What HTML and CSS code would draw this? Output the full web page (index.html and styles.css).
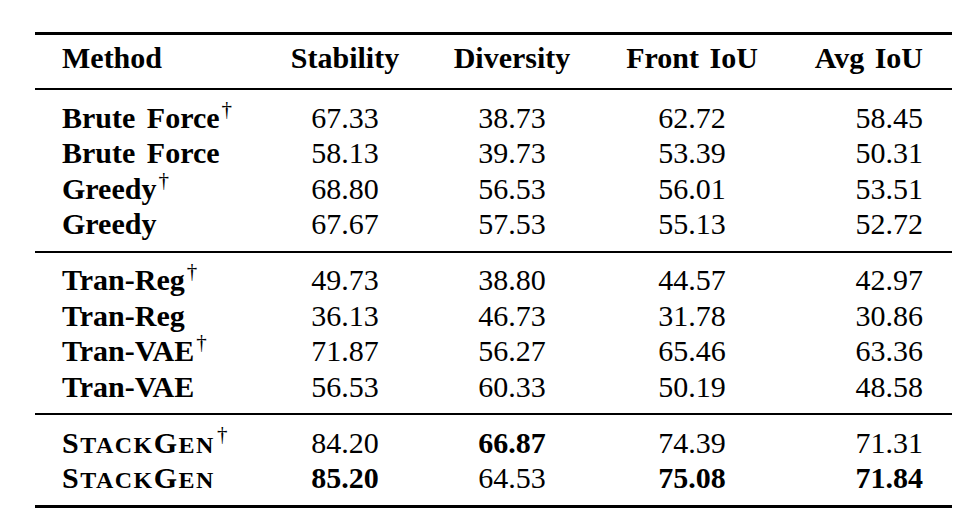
FILE: index.html
```html
<!DOCTYPE html>
<html>
<head>
<meta charset="utf-8">
<link rel="stylesheet" href="styles.css">
</head>
<body>
<div class="table">
  <div class="row head">
    <div class="c1">Method</div>
    <div class="c">Stability</div>
    <div class="c">Diversity</div>
    <div class="c">Front IoU</div>
    <div class="r">Avg IoU</div>
  </div>
  <div class="group">
    <div class="row"><div class="c1">Brute Force<span class="dag">†</span></div><div class="c">67.33</div><div class="c">38.73</div><div class="c">62.72</div><div class="r">58.45</div></div>
    <div class="row"><div class="c1">Brute Force</div><div class="c">58.13</div><div class="c">39.73</div><div class="c">53.39</div><div class="r">50.31</div></div>
    <div class="row"><div class="c1">Greedy<span class="dag">†</span></div><div class="c">68.80</div><div class="c">56.53</div><div class="c">56.01</div><div class="r">53.51</div></div>
    <div class="row"><div class="c1">Greedy</div><div class="c">67.67</div><div class="c">57.53</div><div class="c">55.13</div><div class="r">52.72</div></div>
  </div>
  <div class="group">
    <div class="row"><div class="c1">Tran-Reg<span class="dag">†</span></div><div class="c">49.73</div><div class="c">38.80</div><div class="c">44.57</div><div class="r">42.97</div></div>
    <div class="row"><div class="c1">Tran-Reg</div><div class="c">36.13</div><div class="c">46.73</div><div class="c">31.78</div><div class="r">30.86</div></div>
    <div class="row"><div class="c1">Tran-VAE<span class="dag">†</span></div><div class="c">71.87</div><div class="c">56.27</div><div class="c">65.46</div><div class="r">63.36</div></div>
    <div class="row"><div class="c1">Tran-VAE</div><div class="c">56.53</div><div class="c">60.33</div><div class="c">50.19</div><div class="r">48.58</div></div>
  </div>
  <div class="group last">
    <div class="row"><div class="c1 sc">S<span class="small">TACK</span>G<span class="small">EN</span><span class="dag">†</span></div><div class="c">84.20</div><div class="c b">66.87</div><div class="c">74.39</div><div class="r">71.31</div></div>
    <div class="row"><div class="c1 sc">S<span class="small">TACK</span>G<span class="small">EN</span></div><div class="c b">85.20</div><div class="c">64.53</div><div class="c b">75.08</div><div class="r b">71.84</div></div>
  </div>
</div>
</body>
</html>
```

FILE: styles.css
```css
html, body {
  margin: 0;
  padding: 0;
  background: #ffffff;
}

body {
  font-family: "Liberation Serif", "Times New Roman", serif;
  font-size: 30px;
  color: #000000;
}

.table {
  margin: 32px 0 0 35px;
  width: 917px;
  border-top: 3px solid #000;
  border-bottom: 3px solid #000;
}

.row {
  display: grid;
  grid-template-columns: 247px 126px 208px 152px 184px;
  line-height: 35.5px;
  white-space: nowrap;
}

.head {
  padding: 5px 0 12.5px;
  border-bottom: 2px solid #000;
  font-weight: bold;
  word-spacing: 3px;
}

.group {
  padding: 9.5px 0 9px;
  border-bottom: 2px solid #000;
}

.group.last {
  border-bottom: none;
}

.c1 {
  padding-left: 27px;
  font-weight: bold;
  word-spacing: 4px;
}

.c {
  text-align: center;
}

.r {
  text-align: right;
  padding-right: 29px;
}

.b {
  font-weight: bold;
}

.sc {
  letter-spacing: 1.5px;
}

.sc .small {
  font-size: 0.8em;
  line-height: 0;
  letter-spacing: 1.5px;
}

.dag {
  font-weight: normal;
  font-size: 21px;
  line-height: 0;
  vertical-align: 12px;
  margin-left: 2px;
  letter-spacing: 0;
}
```
